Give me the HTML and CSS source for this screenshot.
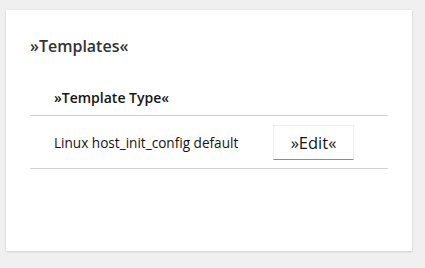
FILE: index.html
```html
<!DOCTYPE html>
<html>
<head>
<meta charset="utf-8">
<link rel="stylesheet" href="styles.css">
</head>
<body>
<div class="card">
  <h2 class="card-title">»Templates«</h2>
  <div class="table">
    <div class="row head">
      <div class="cell name">»Template Type«</div>
      <div class="cell action"></div>
    </div>
    <div class="row">
      <div class="cell name">Linux host_init_config default</div>
      <div class="cell action"><button class="btn">»Edit«</button></div>
    </div>
  </div>
</div>
</body>
</html>
```
FILE: styles.css
```css
html, body { margin: 0; padding: 0; }
body {
  background: #f0f0f0;
  font-family: "Open Sans", "Liberation Sans", sans-serif;
  color: #151515;
  width: 425px;
  height: 268px;
  padding: 10px 13px 0 6px;
  box-sizing: border-box;
}
.card {
  background: #fff;
  height: 241px;
  width: 406px;
  box-sizing: border-box;
  padding: 24px 24px;
  box-shadow: 0 1px 2px rgba(3,3,3,0.12), 0 0 2px rgba(3,3,3,0.06);
}
.card-title {
  margin: 0;
  font-size: 16px;
  font-weight: 600;
  line-height: 24px;
  color: #333;
}
.table { margin-top: 21px; }
.row {
  display: grid;
  grid-template-columns: 243px 1fr;
  border-bottom: 1px solid #d2d2d2;
  align-items: center;
}
.row.head { height: 36px; }
.row:not(.head) { height: 52px; }
.cell { padding-left: 24px; font-size: 13.6px; }
.head .cell { font-weight: 600; font-size: 14px; }
.action { padding-left: 0; }
.btn {
  font-family: inherit;
  font-size: 16.5px;
  color: #151515;
  background: #fff;
  border: 1px solid #ededed;
  border-bottom-color: #8a8d90;
  width: 81px;
  height: 35px;
  padding: 0;
  margin-left: 0;
}
```
